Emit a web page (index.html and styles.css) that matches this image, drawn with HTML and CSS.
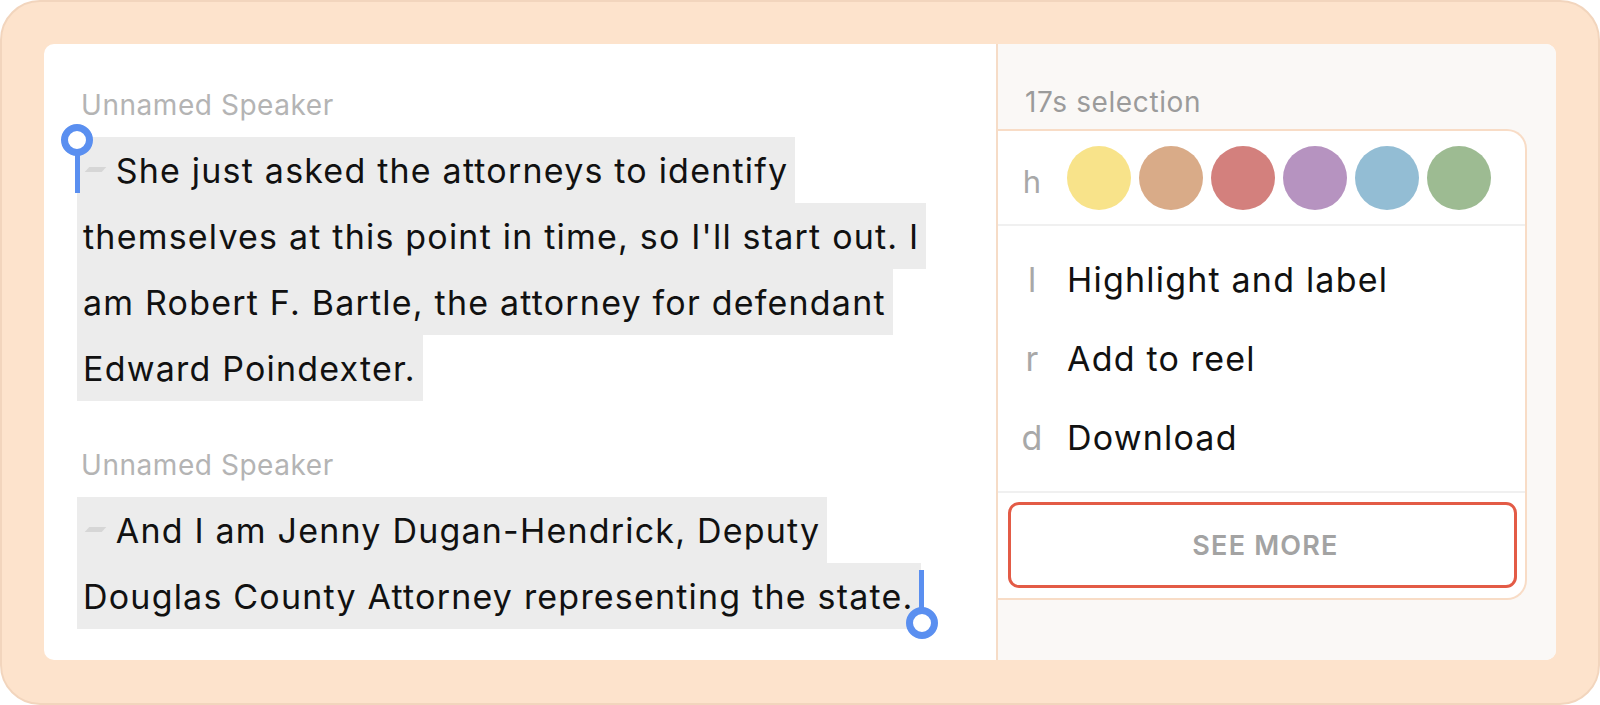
FILE: index.html
```html
<!DOCTYPE html>
<html lang="en">
<head>
<meta charset="utf-8">
<title>Selection menu</title>
<link rel="stylesheet" href="styles.css">
</head>
<body>
<div class="frame">
  <div class="window">
    <section class="transcript">
      <div class="speaker">Unnamed Speaker</div>
      <p class="para"><span class="anchor"><span class="handle handle-start"><span class="knob"></span><span class="stem"></span></span></span><span class="hl"><span class="mark"></span> She just asked the attorneys to identify<br>themselves at this point in time, so I'll start out. I<br>am Robert F. Bartle, the attorney for defendant<br>Edward Poindexter.</span></p>
      <div class="speaker second">Unnamed Speaker</div>
      <p class="para"><span class="hl"><span class="mark"></span> And I am Jenny Dugan-Hendrick, Deputy<br>Douglas County Attorney representing the state.</span><span class="anchor"><span class="handle handle-end"><span class="stem"></span><span class="knob"></span></span></span></p>
    </section>
    <aside class="panel">
      <div class="sel-label">17s selection</div>
      <div class="menu">
        <div class="colors">
          <span class="key">h</span>
          <span class="swatch yellow"></span>
          <span class="swatch tan"></span>
          <span class="swatch red"></span>
          <span class="swatch purple"></span>
          <span class="swatch blue"></span>
          <span class="swatch green"></span>
        </div>
        <ul class="items">
          <li class="item"><span class="key">l</span><span class="label">Highlight and label</span></li>
          <li class="item"><span class="key">r</span><span class="label">Add to reel</span></li>
          <li class="item"><span class="key">d</span><span class="label">Download</span></li>
        </ul>
        <div class="more"><button class="see-more">SEE MORE</button></div>
      </div>
    </aside>
  </div>
</div>
</body>
</html>
```
FILE: styles.css
```css
* { box-sizing: border-box; }
html, body { margin: 0; padding: 0; background: #ffffff; }
body { font-family: Inter, "Noto Sans", sans-serif; }

.frame {
  width: 1600px;
  height: 705px;
  display: flex;
  padding: 42px 42px 43px 42px;
  background: #fde3cc;
  border: 2px solid #f2d5bd;
  border-radius: 40px;
}

.window {
  flex: 1;
  display: flex;
  background: #ffffff;
  border-radius: 10px;
  overflow: hidden;
}

/* transcript */
.transcript {
  width: 952px;
  padding: 44px 0 0 33px;
}
.speaker {
  font-size: 28px;
  line-height: 34px;
  letter-spacing: 0.55px;
  color: #b4b4b4;
  padding-left: 4px;
  margin-bottom: 15px;
}
.speaker.second { margin-top: 47px; }
.para {
  margin: 0;
  font-size: 34px;
  line-height: 66px;
  letter-spacing: 1.2px;
  color: #111111;
  white-space: nowrap;
}
.hl {
  background: #ececec;
  padding: 12.5px 7px 12.5px 6px;
  -webkit-box-decoration-break: clone;
  box-decoration-break: clone;
}
.mark {
  display: inline-block;
  width: 17px;
  height: 5px;
  margin-left: 4px;
  margin-right: 1px;
  background: #d6d6d6;
  transform: skewX(-42deg);
  vertical-align: 10px;
}
.anchor {
  position: relative;
  display: inline;
}
.handle {
  position: absolute;
  width: 32px;
  display: flex;
  flex-direction: column;
  align-items: center;
}
.handle-start { left: -16px; top: -25px; }
.handle-end { left: -15px; top: -5px; }
.knob {
  width: 32px;
  height: 32px;
  border: 7px solid #5a8ff0;
  border-radius: 50%;
  background: #ffffff;
}
.stem {
  width: 5px;
  height: 38px;
  background: #5a8ff0;
}
.handle-start .stem { margin-top: -1px; }
.handle-end .stem { margin-bottom: -1px; }

/* panel */
.panel {
  flex: 1;
  background: #faf8f6;
  border-left: 2px solid #f6dcc7;
  padding: 41px 29px 0 0;
}
.sel-label {
  font-size: 28px;
  line-height: 34px;
  letter-spacing: 0.6px;
  color: #9b9b9b;
  padding-left: 27px;
  margin-bottom: 10px;
}
.menu {
  background: #ffffff;
  border: 2px solid #f8dcc6;
  border-left: 0;
  border-radius: 0 20px 20px 0;
}
.key {
  width: 54px;
  text-align: center;
  color: #a8a8a8;
  letter-spacing: 0;
  flex: none;
}
.colors {
  height: 95px;
  display: flex;
  align-items: center;
  gap: 8px;
  padding-left: 7px;
  border-bottom: 2px solid #f0f0f0;
  font-size: 31px;
}
.colors .key { padding-top: 8px; }
.swatch {
  width: 64px;
  height: 64px;
  border-radius: 50%;
  flex: none;
}
.yellow { background: #f8e38a; }
.tan { background: #d9ab88; }
.red { background: #d3807d; }
.purple { background: #b693c0; }
.blue { background: #93bdd4; }
.green { background: #9dbb92; }

.items {
  list-style: none;
  margin: 0;
  padding: 14px 0;
  border-bottom: 2px solid #f0f0f0;
}
.item {
  height: 79px;
  display: flex;
  align-items: center;
  gap: 8px;
  padding-left: 7px;
  font-size: 34px;
  color: #111111;
}
.item .label { letter-spacing: 1.2px; }
.more {
  padding: 9px 8px 10px 10px;
}
.see-more {
  display: block;
  width: 100%;
  height: 86px;
  border: 3px solid #e35b46;
  border-radius: 11px;
  background: #ffffff;
  font-family: Inter, "Noto Sans", sans-serif;
  font-weight: 600;
  font-size: 27px;
  letter-spacing: 1.2px;
  color: #a3a3a3;
  padding: 0 0 0 6px;
}
```
